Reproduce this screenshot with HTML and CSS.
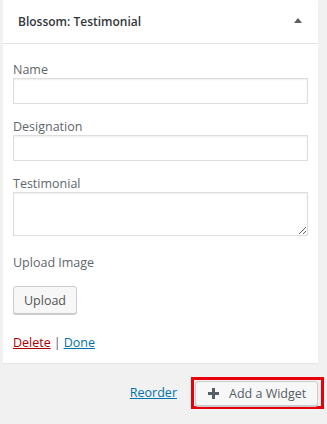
FILE: index.html
```html
<!DOCTYPE html>
<html lang="en">
<head>
<meta charset="utf-8">
<title>Blossom: Testimonial</title>
<link rel="stylesheet" href="styles.css">
</head>
<body>
<div class="widget">
  <div class="widget-top">
    <span class="widget-title">Blossom: Testimonial</span>
    <span class="toggle"></span>
  </div>
  <div class="widget-inside">
    <div class="field">
      <label class="label" for="f-name">Name</label>
      <input class="input" id="f-name" type="text">
    </div>
    <div class="field">
      <label class="label" for="f-des">Designation</label>
      <input class="input" id="f-des" type="text">
    </div>
    <div class="field">
      <label class="label" for="f-test">Testimonial</label>
      <textarea class="textarea" id="f-test"></textarea>
    </div>
    <div class="field">
      <span class="label">Upload Image</span>
      <div class="upload-row"><button class="btn" type="button">Upload</button></div>
    </div>
    <div class="controls">
      <a class="link-delete" href="#">Delete</a><span class="sep">|</span><a class="link-done" href="#">Done</a>
    </div>
  </div>
</div>
<div class="actions">
  <a class="reorder" href="#">Reorder</a>
  <span class="highlight">
    <button class="btn add-widget" type="button">
      <svg class="plus" width="11" height="11" viewBox="0 0 11 11"><path d="M4 0h3v4h4v3H7v4H4V7H0V4h4z" fill="#555d66"/></svg>
      <span>Add a Widget</span>
    </button>
  </span>
</div>
</body>
</html>
```
FILE: styles.css
```css
* { box-sizing: border-box; }
body {
  margin: 0;
  background: #f1f1f1;
  font-family: "Open Sans", "Noto Sans", sans-serif;
  font-size: 12.5px;
  color: #555d66;
}
.widget {
  margin-left: 3px;
  width: 315px;
  background: #fff;
  box-shadow: 0 1px 1px rgba(0,0,0,0.04);
}
.widget-top {
  height: 44px;
  border-bottom: 1px solid #e5e5e5;
  display: flex;
  align-items: center;
  justify-content: space-between;
  padding: 0 16px 0 15px;
}
.widget-title {
  font-weight: 600;
  font-size: 12px;
  color: #32373c;
}
.toggle {
  width: 0;
  height: 0;
  border-left: 4px solid transparent;
  border-right: 4px solid transparent;
  border-bottom: 5px solid #5b5f63;
  margin-top: -2px;
}
.widget-inside {
  padding: 17px 10px 12px;
  display: flex;
  flex-direction: column;
}
.field {
  display: flex;
  flex-direction: column;
  margin-bottom: 14px;
}
.label {
  line-height: 17px;
  color: #60666c;
}
.input {
  height: 26px;
  border: 1px solid #ddd;
  box-shadow: inset 0 1px 2px rgba(0,0,0,0.07);
  background: #fff;
  margin: 0;
  font: inherit;
}
.textarea {
  height: 44px;
  border: 1px solid #ddd;
  box-shadow: inset 0 1px 2px rgba(0,0,0,0.07);
  margin: 0;
  font: inherit;
  resize: both;
  width: 100%;
}
.field:nth-child(3) { margin-bottom: 18px; }
.upload-row {
  display: flex;
  margin-top: 15px;
}
.btn {
  font: inherit;
  font-size: 12.5px;
  color: #555;
  background: #f7f7f7;
  border: 1px solid #ccc;
  border-radius: 3px;
  box-shadow: 0 1px 0 #ccc;
  height: 28px;
  padding: 0 10px;
  margin: 0;
  cursor: pointer;
}
.upload-row .btn { width: 64px; padding: 0; }
.controls {
  margin-top: 6px;
  line-height: 17px;
}
.link-delete { color: #a00; }
.link-done { color: #0073aa; }
.sep { color: #555d66; margin: 0 3px; }
.actions {
  display: flex;
  justify-content: flex-end;
  align-items: center;
  margin-top: 14px;
  margin-right: 3px;
  gap: 14px;
}
.reorder {
  color: #0073aa;
  margin-top: -2px;
}
.highlight {
  display: inline-flex;
  border: 3px solid #e8000b;
  padding: 1px 3px 0 1px;
}
.add-widget {
  width: 123px;
  height: 25px;
  display: flex;
  align-items: center;
  padding: 0 0 0 12px;
  gap: 10px;
  color: #555d66;
}
.plus { flex: none; }
```
